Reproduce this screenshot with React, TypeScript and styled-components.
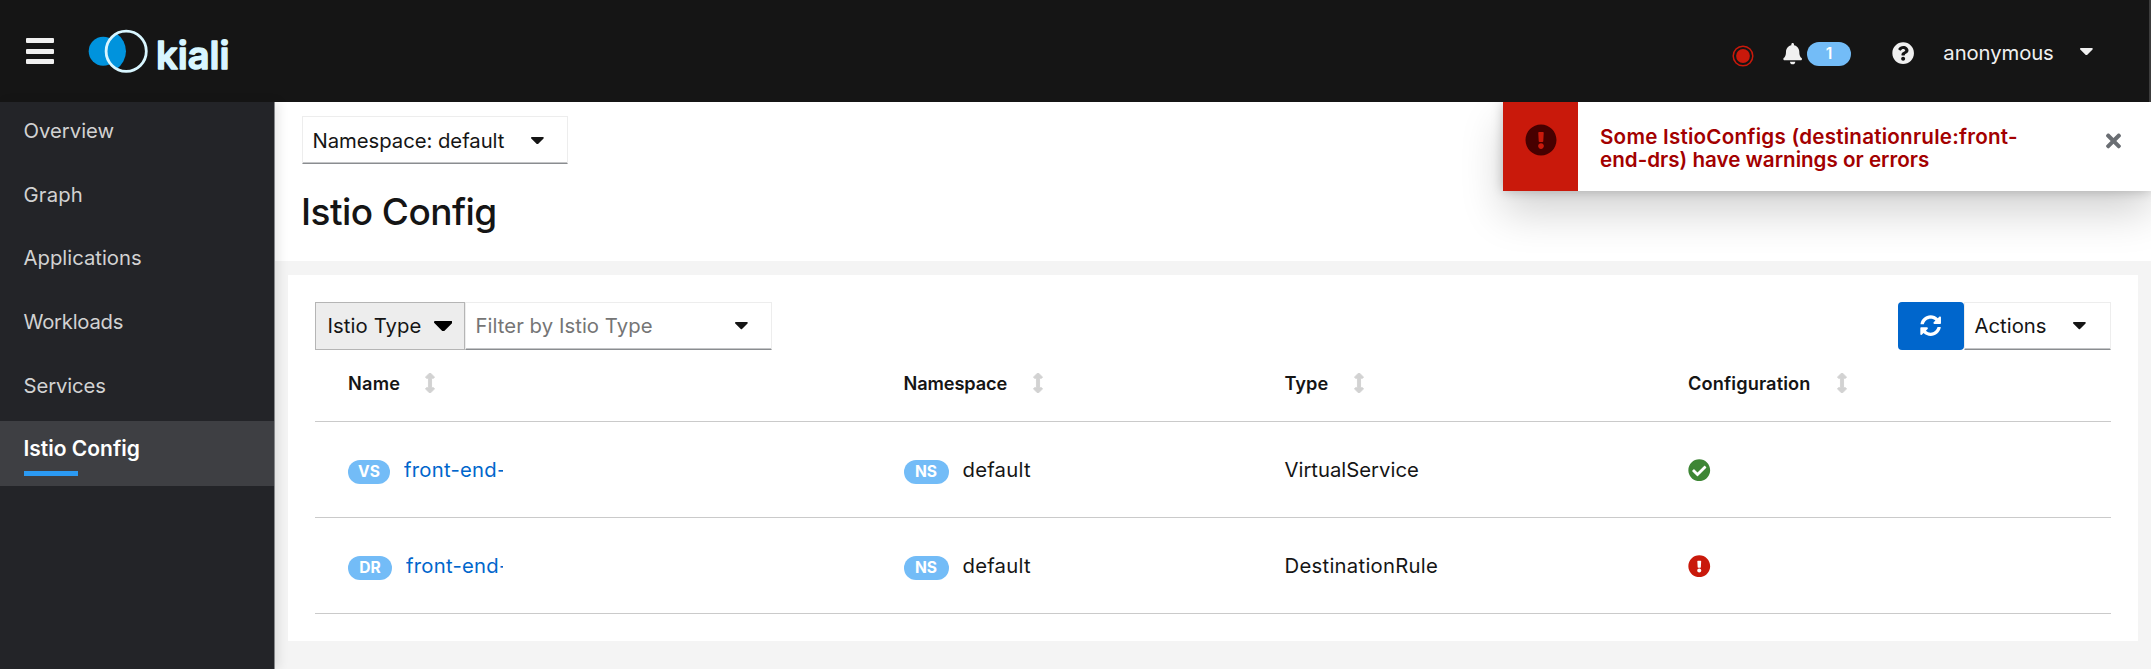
import React from "react";
import styled, { createGlobalStyle } from "styled-components";
import {
  FaArrowsAltV,
  FaBell,
  FaCheckCircle,
  FaExclamationCircle,
  FaQuestionCircle,
  FaSyncAlt,
  FaTimes,
} from "react-icons/fa";

const GlobalStyle = createGlobalStyle`
  * { box-sizing: border-box; }
  body {
    margin: 0;
    overflow: hidden;
    background: #f4f4f4;
    color: #151515;
    font-family: Inter, "Liberation Sans", sans-serif;
    font-size: 20.3px;
    line-height: 32px;
  }
  svg { display: block; flex: none; }
`;

const Page = styled.div`
  position: relative;
  display: flex;
  flex-direction: column;
  height: 669px;
`;

/* Masthead */

const Masthead = styled.header`
  display: flex;
  align-items: center;
  flex: none;
  height: 102px;
  padding: 0 56px 0 25.5px;
  border-right: 2px solid #3c3c3c;
  background: #151515;
  color: #f0f0f0;
`;

const MenuButton = styled.button`
  display: flex;
  flex-direction: column;
  gap: 5.4px;
  width: 28.5px;
  padding: 0;
  border: 0;
  background: none;
`;

const MenuBar = styled.span`
  height: 5px;
  border-radius: 1px;
  background: #f0f0f0;
`;

const Brand = styled.a`
  margin-left: 30px;
`;

const Tools = styled.div`
  display: flex;
  align-items: center;
  margin-left: auto;
`;

const Tool = styled.div<{ $gap?: number; $drop?: number }>`
  display: flex;
  align-items: center;
  margin-left: ${(p) => p.$gap ?? 0}px;
  padding-top: ${(p) => (p.$drop ?? 0) * 2}px;
`;

const CountBadge = styled.span`
  width: 44px;
  height: 24px;
  border-radius: 12px;
  background: #73bcf7;
  color: #fff;
  font-size: 15.5px;
  font-weight: 600;
  line-height: 24px;
  text-align: center;
`;

/* Body and navigation */

const Body = styled.div`
  display: flex;
  flex: 1;
  min-height: 0;
`;

const Sidebar = styled.nav`
  position: relative;
  z-index: 1;
  flex: none;
  width: 275px;
  padding-top: 1px;
  border-right: 1px solid #85878a;
  background: #232428;
  box-shadow: 4px 0 10px rgba(3, 3, 3, 0.09);
`;

const NavItem = styled.a<{ $active?: boolean }>`
  display: flex;
  flex-direction: column;
  height: ${(p) => (p.$active ? 65 : 63.7)}px;
  padding: 15px 0 0 23.5px;
  background: ${(p) => (p.$active ? "#3e3f43" : "transparent")};
  color: ${(p) => (p.$active ? "#fff" : "#d2d2d2")};
  font-size: ${(p) => (p.$active ? 21 : 20.3)}px;
  font-weight: ${(p) => (p.$active ? 600 : 400)};
  line-height: 25px;

  &::after {
    content: "";
    width: 54px;
    height: 5px;
    margin: 10px 0 0 0.5px;
    background: ${(p) => (p.$active ? "#2b9af3" : "transparent")};
  }
`;

const Main = styled.main`
  display: flex;
  flex-direction: column;
  flex: 1;
  min-width: 0;
`;

const PageHead = styled.section`
  height: 159px;
  padding: 14px 27px 0;
  background: #fff;
`;

const Title = styled.h1`
  margin: 24px 0 0 -1px;
  font-size: 37px;
  font-weight: 500;
  line-height: 48px;
  letter-spacing: -0.55px;
`;

const Card = styled.section`
  height: 366px;
  margin: 13.5px 13px 0;
  padding: 27px 27px 0;
  background: #fff;
`;

/* Controls */

const Text = styled.span<{ $track?: number }>`
  letter-spacing: ${(p) => p.$track ?? 0}px;
  white-space: nowrap;
`;

const Select = styled.div<{ $width: number; $muted?: boolean; $end: number }>`
  display: flex;
  align-items: center;
  justify-content: space-between;
  width: ${(p) => p.$width}px;
  height: 48px;
  padding: 1px ${(p) => p.$end}px 0 9.5px;
  border: 1px solid #ededed;
  border-bottom-color: #8a8d90;
  box-shadow: inset 0 -1px 0 #c4c5c7;

  ${Text} {
    color: ${(p) => (p.$muted ? "#757575" : "#151515")};
  }
`;

const Toolbar = styled.div`
  display: flex;
  height: 48px;
`;

const FilterType = styled.button`
  display: flex;
  align-items: center;
  justify-content: space-between;
  width: 150px;
  height: 48px;
  padding: 1px 12px 0 11.5px;
  border: 1px solid #b5b5b5;
  background: #ededed;
  color: #151515;
  font: inherit;
`;

const RefreshButton = styled.button`
  display: flex;
  align-items: center;
  justify-content: center;
  width: 66.5px;
  height: 48.5px;
  margin-left: auto;
  padding: 0;
  border: 0;
  border-radius: 4px;
  background: #06c;
  color: #fff;
`;

/* Table */

const Row = styled.div<{ $head?: boolean }>`
  display: grid;
  grid-template-columns: 555.5px 381px 403.5px 1fr;
  align-items: center;
  height: ${(p) => (p.$head ? 72 : 96)}px;
  padding: ${(p) => (p.$head ? "0 0 3.5px 33px" : "2px 0 0 33px")};
  border-bottom: 1px solid #cacaca;
  font-size: ${(p) => (p.$head ? 18.2 : 20.3)}px;
  font-weight: ${(p) => (p.$head ? 600 : 400)};
`;

const Cell = styled.div`
  display: flex;
  align-items: center;
`;

const SortIcon = styled(FaArrowsAltV)<{ $gap: number }>`
  width: 10px;
  height: 20px;
  margin-left: ${(p) => p.$gap}px;
  color: #d2d2d2;
  stroke: #d2d2d2;
  stroke-width: 24px;
`;

const Badge = styled.span<{ $width: number }>`
  width: ${(p) => p.$width}px;
  height: 24px;
  margin: 3px 14px 0 0;
  border-radius: 12px;
  background: #73bcf7;
  color: #fff;
  font-size: 15.6px;
  font-weight: 700;
  line-height: 24px;
  text-align: center;
`;

const ItemLink = styled.a<{ $width: number }>`
  width: ${(p) => p.$width}px;
  overflow: hidden;
  color: #06c;
  letter-spacing: 0.25px;
  white-space: nowrap;
`;

/* Notification */

const Toast = styled.aside`
  position: absolute;
  top: 102px;
  right: 0;
  z-index: 2;
  display: flex;
  width: 648px;
  height: 88.5px;
  background: #fff;
  box-shadow: 0 21px 43px rgba(3, 3, 3, 0.18), 0 0 11px rgba(3, 3, 3, 0.22);
  clip-path: inset(0 0 -90px -60px);
`;

const ToastIcon = styled.div`
  width: 75px;
  padding: 22px 0 0 21.5px;
  background: #c9190b;
  color: #470000;
`;

const ToastMessage = styled.p`
  display: flex;
  flex-direction: column;
  flex: 1;
  margin: 0;
  padding: 24px 0 0 22px;
  color: #a30000;
  font-size: 20.6px;
  font-weight: 600;
  line-height: 22.7px;
`;

const CloseButton = styled.button`
  display: flex;
  align-items: flex-start;
  width: 45px;
  padding: 28px 0 0;
  border: 0;
  background: none;
  color: #6a6e73;

  svg {
    width: 15px;
    height: 21.8px;
  }
`;

const Caret = ({ width = 12.8, color = "#151515" }: { width?: number; color?: string }) => (
  <svg width={width} height={width * 0.568} viewBox="11.5 192 297 168.7" fill={color}>
    <path d="M31.3 192h257.3c17.8 0 26.7 21.5 14.1 34.1L174.1 354.8c-7.8 7.8-20.5 7.8-28.3 0L17.2 226.1C4.6 213.5 13.5 192 31.3 192z" />
  </svg>
);

const KialiLogo = () => (
  <svg width="156" height="62" viewBox="84 20 156 62">
    <circle cx="103.2" cy="51.2" r="14.5" fill="#0093dd" />
    <path d="M116.5 33.5A21.4 21.4 0 0 1 116.5 69A20 20 0 0 1 116.5 33.5Z" fill="#0093dd" />
    <circle cx="126.2" cy="51.3" r="20.1" fill="none" stroke="#d8f6ff" strokeWidth="2.8" />
    <text
      x="156"
      y="69.4"
      textLength="73.5"
      lengthAdjust="spacingAndGlyphs"
      fill="#d8f6ff"
      stroke="#d8f6ff"
      strokeWidth="1.4"
      strokeLinejoin="round"
      fontSize="38.5"
      fontWeight="600"
    >
      kiali
    </text>
  </svg>
);

const RecordIcon = () => (
  <svg width="22" height="22" viewBox="0 0 22 22">
    <circle cx="11" cy="11" r="9.8" fill="none" stroke="#c9190b" strokeWidth="1.5" />
    <circle cx="11" cy="11" r="6.9" fill="#c9190b" />
  </svg>
);

const navItems: [string, number][] = [
  ["Overview", 0],
  ["Graph", 0.2],
  ["Applications", 0],
  ["Workloads", -0.25],
  ["Services", -0.1],
  ["Istio Config", 0],
];

const columns: [string, number, number][] = [
  ["Name", 0.2, 25],
  ["Namespace", -0.12, 26],
  ["Type", 0, 26],
  ["Configuration", 0.12, 26],
];

const rows = [
  { badge: "VS", badgeWidth: 42, linkWidth: 99, type: "VirtualService", track: 0, valid: true },
  { badge: "DR", badgeWidth: 44, linkWidth: 97, type: "DestinationRule", track: 0.27, valid: false },
];

export default function App() {
  return (
    <>
      <GlobalStyle />
      <Page>
        <Masthead>
          <MenuButton aria-label="Menu">
            <MenuBar />
            <MenuBar />
            <MenuBar />
          </MenuButton>
          <Brand>
            <KialiLogo />
          </Brand>
          <Tools>
            <Tool $drop={4.5}>
              <RecordIcon />
            </Tool>
            <Tool $gap={27.5} $drop={3}>
              <FaBell size={21.3} />
            </Tool>
            <Tool $gap={4} $drop={3}>
              <CountBadge>1</CountBadge>
            </Tool>
            <Tool $gap={41} $drop={2.3}>
              <FaQuestionCircle size={22.3} />
            </Tool>
            <Tool $gap={29} $drop={1.6}>
              <Text $track={-0.1}>anonymous</Text>
            </Tool>
            <Tool $gap={26.5} $drop={0.7}>
              <Caret color="#f0f0f0" />
            </Tool>
          </Tools>
        </Masthead>
        <Body>
          <Sidebar>
            {navItems.map(([label, track]) => (
              <NavItem key={label} $active={label === "Istio Config"}>
                <Text $track={track}>{label}</Text>
              </NavItem>
            ))}
          </Sidebar>
          <Main>
            <PageHead>
              <Select $width={266} $end={23.5}>
                <Text $track={-0.04}>Namespace: default</Text>
                <Caret />
              </Select>
              <Title>Istio Config</Title>
            </PageHead>
            <Card>
              <Toolbar>
                <FilterType>
                  <Text $track={0.1}>Istio Type</Text>
                  <Caret width={18.5} color="#000" />
                </FilterType>
                <Select $width={307} $end={23.5} $muted>
                  <Text $track={0.06}>Filter by Istio Type</Text>
                  <Caret />
                </Select>
                <RefreshButton aria-label="Refresh">
                  <FaSyncAlt size={21.3} />
                </RefreshButton>
                <Select $width={147} $end={24.5}>
                  <Text>Actions</Text>
                  <Caret />
                </Select>
              </Toolbar>
              <Row $head>
                {columns.map(([label, track, gap]) => (
                  <Cell key={label}>
                    <Text $track={track}>{label}</Text>
                    <SortIcon $gap={gap} />
                  </Cell>
                ))}
              </Row>
              {rows.map((row) => (
                <Row key={row.badge}>
                  <Cell>
                    <Badge $width={row.badgeWidth}>{row.badge}</Badge>
                    <ItemLink $width={row.linkWidth}>front-end-</ItemLink>
                  </Cell>
                  <Cell>
                    <Badge $width={45}>NS</Badge>
                    <Text $track={0.23}>default</Text>
                  </Cell>
                  <Cell>
                    <Text $track={row.track}>{row.type}</Text>
                  </Cell>
                  <Cell>
                    {row.valid ? (
                      <FaCheckCircle size={22.5} color="#3e8635" />
                    ) : (
                      <FaExclamationCircle size={22.5} color="#c9190b" />
                    )}
                  </Cell>
                </Row>
              ))}
            </Card>
          </Main>
        </Body>
        <Toast>
          <ToastIcon>
            <FaExclamationCircle size={32} />
          </ToastIcon>
          <ToastMessage>
            <Text $track={0.23}>Some IstioConfigs (destinationrule:front-</Text>
            <Text>end-drs) have warnings or errors</Text>
          </ToastMessage>
          <CloseButton aria-label="Close">
            <FaTimes />
          </CloseButton>
        </Toast>
      </Page>
    </>
  );
}
